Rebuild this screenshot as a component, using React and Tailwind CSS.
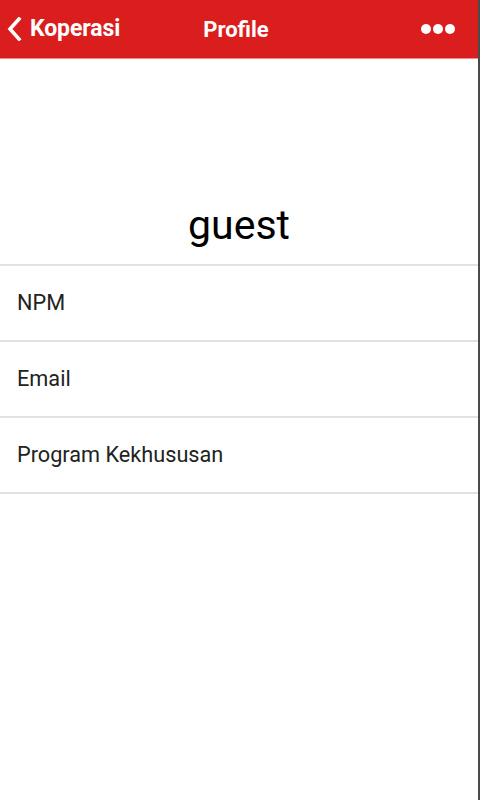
import React from "react";

export default function App() {
  const rows = ["NPM", "Email", "Program Kekhususan"];
  return (
    <div
      className="w-[480px] h-[800px] bg-white flex flex-col border-r-2 border-[#4a4a4a] overflow-hidden"
      style={{ fontFamily: "Roboto, 'Liberation Sans', sans-serif" }}
    >
      <header className="h-[59px] bg-[#da1e1e] flex items-center relative text-white shrink-0 border-b border-[#f08a8a]">
        <div className="flex items-center pl-[7px] gap-[8px]">
          <svg width="15" height="24" viewBox="0 0 15 24">
            <path d="M12 2 L3 12 L12 22" fill="none" stroke="white" strokeWidth="3.6" strokeLinecap="square" />
          </svg>
          <span className="text-[23px] font-bold tracking-[-0.1px]">Koperasi</span>
        </div>
        <div className="absolute left-0 right-0 text-center text-[22px] font-bold pointer-events-none">
          <span className="ml-[-6px]">Profile</span>
        </div>
        <div className="ml-auto mr-[23px] flex gap-[2px]">
          <span className="w-[10px] h-[10px] rounded-full bg-white" />
          <span className="w-[10px] h-[10px] rounded-full bg-white" />
          <span className="w-[10px] h-[10px] rounded-full bg-white" />
        </div>
      </header>
      <div className="h-[205px] flex items-end justify-center pb-[18px]">
        <span className="text-[41px] text-black leading-none">guest</span>
      </div>
      <div className="border-t-2 border-[#e2e2e2]">
        {rows.map((r) => (
          <div key={r} className="h-[76px] flex items-center pl-[17px] border-b-2 border-[#e2e2e2] text-[21.7px] text-[#222]">
            {r}
          </div>
        ))}
      </div>
    </div>
  );
}
